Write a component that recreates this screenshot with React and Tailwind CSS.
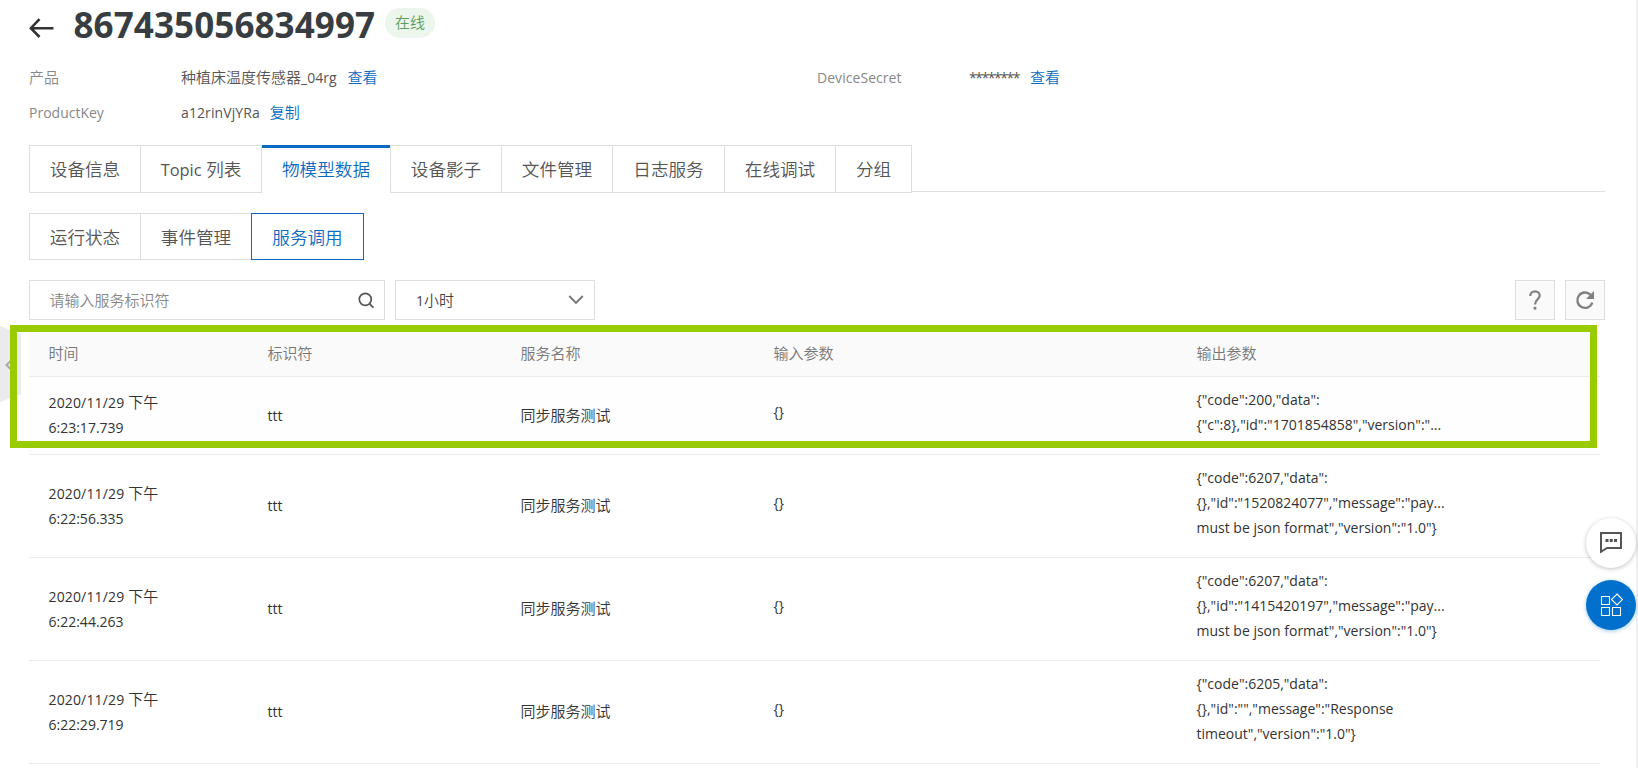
const L = ({ children, className = "text-[14px]" }) => <span className={`font-normal ${className}`}>{children}</span>;

const tabs = [
  { label: "设备信息", w: "w-[111px]" },
  { label: "Topic 列表", w: "w-[121px]" },
  { label: "物模型数据", w: "w-[129px]", active: true },
  { label: "设备影子", w: "w-[111px]" },
  { label: "文件管理", w: "w-[111px]" },
  { label: "日志服务", w: "w-[112px]" },
  { label: "在线调试", w: "w-[111px]" },
  { label: "分组", w: "w-[77px]", last: true },
];

const rows = [
  { time: "6:23:17.739", out: ['{"code":200,"data":', '{"c":8},"id":"1701854858","version":"...'] },
  { time: "6:22:56.335", out: ['{"code":6207,"data":', '{},"id":"1520824077","message":"pay...', 'must be json format","version":"1.0"}'] },
  { time: "6:22:44.263", out: ['{"code":6207,"data":', '{},"id":"1415420197","message":"pay...', 'must be json format","version":"1.0"}'] },
  { time: "6:22:29.719", out: ['{"code":6205,"data":', '{},"id":"","message":"Response', 'timeout","version":"1.0"}'] },
];

const cols = "grid grid-cols-[219px_253px_253px_423px_1fr] pl-[19.5px]";

function Header() {
  return (
    <header className="flex h-[60px] items-start pl-[29px]">
      <svg className="mt-[18px] h-[20px] w-[25px]" viewBox="0 0 25 20" fill="none" stroke="#333" strokeWidth="2.6">
        <path d="M10.500 1.200 1.900 10.200 10.500 19M2 10.200H24.500" />
      </svg>
      <h1 className="ml-[19.5px] h-[50px] w-[302px] text-[35px] leading-[49px] font-bold tracking-[0.1px] text-[#373d41]">867435056834997</h1>
      <span className="mt-2 ml-[9.5px] flex h-[30px] w-[50px] items-center justify-center rounded-full bg-[#ecf6ed] pb-[2px] text-[#5a9e5f]">在线</span>
    </header>
  );
}

function Info() {
  return (
    <section className="grid h-[85px] grid-cols-[152px_636px_152px_1fr] grid-rows-[35px_35px] pl-[29px] leading-[35px] text-[#555]">
      <span className="text-[#888]">产品</span>
      <span>种植床温度传感器<L>_04rg</L><a className="ml-[11px] text-[#0b6bc2]">查看</a></span>
      <span className="text-[#888]"><L className="text-[14px] tracking-[0.05px]">DeviceSecret</L></span>
      <span><L className="text-[14px] tracking-[-1.450px]">********</L><a className="ml-[11px] text-[#0b6bc2]">查看</a></span>
      <span className="text-[#888]"><L>ProductKey</L></span>
      <span><L className="text-[14px] tracking-[0.1px]">a12rinVjYRa</L><a className="ml-[10px] text-[#0b6bc2]">复制</a></span>
    </section>
  );
}

function Tabs() {
  return (
    <nav className="mr-[33px] ml-[29px] flex h-[47px] border-b border-[#dedede] text-[17.6px]">
      {tabs.map((t) => (
        <div
          key={t.label}
          className={`${t.w} flex h-[48px] shrink-0 items-center justify-center border-l border-[#dedede] bg-white whitespace-nowrap ${
            t.active ? "text-[#0b6bc2] shadow-[inset_0_3px_0_#0b6bc2]" : "border-t border-b text-[#555]"
          } ${t.last ? "border-r" : ""}`}
        >
          {t.label === "Topic 列表" ? <span><L className="text-[16.4px]">Topic</L> 列表</span> : t.label}
        </div>
      ))}
    </nav>
  );
}

function SubTabs() {
  return (
    <nav className="mt-[21px] ml-[29px] flex h-[47px] text-[17.6px] text-[#555]">
      <div className="flex w-[111px] items-center justify-center border border-r-0 border-[#dedede] pt-px">运行状态</div>
      <div className="flex w-[111px] items-center justify-center border border-r-0 border-[#dedede] pt-px">事件管理</div>
      <div className="flex w-[113px] items-center justify-center border border-[#0b6bc2] pt-px text-[#0b6bc2]">服务调用</div>
    </nav>
  );
}

function Filters() {
  return (
    <div className="mt-[20px] mr-[33px] ml-[29px] flex h-[40px] gap-[10px]">
      <div className="flex w-[356px] items-center justify-between border border-[#dedede] pr-[9px] pl-[19.5px] text-[#888]">
        请输入服务标识符
        <svg className="h-[18px] w-[18px]" viewBox="0 0 18 18" fill="none" stroke="#555" strokeWidth="1.7">
          <circle cx="8.3" cy="8.3" r="6" />
          <path d="m12.400 12.600 4 4" />
        </svg>
      </div>
      <div className="flex w-[200px] items-center justify-between border border-[#dedede] pr-[10px] pl-[20px] text-[#444]">
        <span><L>1</L>小时</span>
        <svg className="h-[10px] w-[16px]" viewBox="0 0 16 10" fill="none" stroke="#777" strokeWidth="1.8">
          <path d="m1.200 1 6.800 7 6.800-7" />
        </svg>
      </div>
      <button className="ml-auto flex w-[40px] items-center justify-center border border-[#dedede] bg-[#fafafa]">
        <svg className="h-[20px] w-[12px]" viewBox="0 0 12 20" fill="none" stroke="#808080" strokeWidth="2.2">
          <path d="M1.300 6V5.500a4.700 4.200 0 0 1 9.400 0c0 3.600-4.700 4-4.700 9" />
          <path d="M4.600 18.200h2.700" strokeWidth="2.800" />
        </svg>
      </button>
      <button className="flex w-[40px] items-center justify-center border border-[#dedede] bg-[#fafafa]">
        <svg className="h-[20px] w-[20px]" viewBox="0 0 20 20" fill="none" stroke="#808080" strokeWidth="2.4">
          <path d="M17.400 12.600A7.700 7.700 0 1 1 15.600 4.800" />
          <path d="M19 1v8h-8z" fill="#808080" stroke="none" />
        </svg>
      </button>
    </div>
  );
}

function Table() {
  return (
    <div className="mt-[10px] mr-[38px] ml-[29px] text-[#333]">
      <div className={`${cols} h-[47px] items-center border-b border-[#ebebeb] bg-[#fafafa] text-[#777]`}>
        <span>时间</span>
        <span>标识符</span>
        <span>服务名称</span>
        <span>输入参数</span>
        <span>输出参数</span>
      </div>
      {rows.map((r, i) => (
        <div key={r.time} className={`${cols} ${i ? "h-[103px]" : "h-[78px] bg-[#fefefe]"} items-center border-b border-[#ebebeb] leading-[25px]`}>
          <div className={i ? "" : "pb-[2px]"}>
            <div><L className="text-[14px] tracking-[0.15px]">2020/11/29</L> 下午</div>
            <div><L>{r.time}</L></div>
          </div>
          <div className={i ? "pb-[2px]" : ""}><L>ttt</L></div>
          <div className={i ? "pb-[2px]" : ""}>同步服务测试</div>
          <div className={i ? "pb-[8px]" : "pb-[9px]"}><L>{"{}"}</L></div>
          <div className="pb-[8px] text-[14px] font-normal whitespace-nowrap">
            {r.out.map((o) => <div key={o}>{o}</div>)}
          </div>
        </div>
      ))}
    </div>
  );
}

export default function App() {
  return (
    <div className="relative h-[768px] w-[1638px] overflow-hidden bg-white font-['Open_Sans','Noto_Sans_CJK_SC',sans-serif] text-[15px] font-[350]">
      <Header />
      <Info />
      <Tabs />
      <SubTabs />
      <Filters />
      <Table />
      <svg className="absolute top-[325px] left-0 h-[78px] w-[21px]" viewBox="0 0 21 78">
        <path d="M0 1 21 9V69L0 77Z" fill="#ebebeb" />
        <path d="m10.500 36-4 4 4 4" fill="none" stroke="#aaa" strokeWidth="2" />
      </svg>
      <div className="absolute top-[325px] left-[10px] h-[123px] w-[1587px] border-[7px] border-[#99cc00]" />
      <div className="absolute top-0 right-0 h-full w-[2px] bg-[#f0f0f0]" />
      <div className="absolute top-[518px] left-[1586px] flex h-[50px] w-[50px] items-center justify-center rounded-full bg-white shadow-[0_1px_4px_rgba(0,0,0,0.25)]">
        <svg className="mb-[2px] h-[24px] w-[24px]" viewBox="0 0 24 24" fill="none" stroke="#555" strokeWidth="2">
          <path d="M2 3h20v15H8L2 21.800Z" />
          <path d="M6.500 10.500h3M10.750 10.500h3M15 10.500h3" strokeWidth="2.800" />
        </svg>
      </div>
      <div className="absolute top-[580px] left-[1586px] flex h-[50px] w-[50px] items-center justify-center rounded-full bg-[#0070cc] shadow-[0_1px_4px_rgba(0,112,204,0.4)]">
        <svg className="h-[24px] w-[24px]" viewBox="0 0 24 24" fill="none" stroke="#fff" strokeWidth="1.1">
          <path d="M2.500 3.500h8v8h-8zM2.500 14.500h8v8h-8zM13.500 14.500h8v8h-8zM18 1l5.500 5.500L18 12l-5.500-5.500z" />
        </svg>
      </div>
    </div>
  );
}
